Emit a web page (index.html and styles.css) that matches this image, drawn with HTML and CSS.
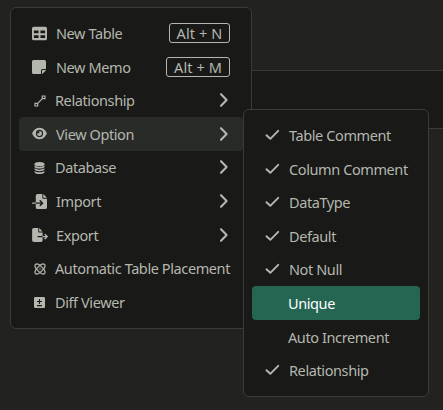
FILE: index.html
```
<!DOCTYPE html>
<html lang="en">
<head>
<meta charset="utf-8">
<title>Context menu</title>
<link rel="stylesheet" href="styles.css">
</head>
<body>
<svg class="defs" aria-hidden="true">
  <symbol id="chevron" viewBox="0 0 10 16"><path d="M2 2.200 7.600 8 2 13.800" fill="none" stroke="currentColor" stroke-width="2.1" stroke-linecap="round" stroke-linejoin="round"/></symbol>
  <symbol id="check" viewBox="0 0 15 12"><path d="M1.5 6.2 5.3 9.8 13.2 1.8" fill="none" stroke="currentColor" stroke-width="1.9" stroke-linecap="round" stroke-linejoin="round"/></symbol>
</svg>
<main class="canvas">
  <div class="band"></div>
  <ul class="menu menu-main">
    <li class="row"><span class="icon"><svg width="15" height="15" viewBox="0 0 512 512"><path fill="currentColor" fill-rule="evenodd" d="M64 24h384a64 64 0 0 1 64 64v336a64 64 0 0 1-64 64H64a64 64 0 0 1-64-64V88a64 64 0 0 1 64-64zM64 152v96h160v-96zM288 152v96h160v-96zM64 312v96h160v-96zM288 312v96h160v-96z"/></svg></span><span class="label inset">New Table</span><kbd class="n">Alt + N</kbd></li>
    <li class="row"><span class="icon"><svg width="14" height="14" viewBox="0 0 14 14"><path fill="currentColor" d="M1.5 0h11A1.5 1.5 0 0 1 14 1.5V9h-3.500A1.500 1.500 0 0 0 9 10.500V14H1.500A1.500 1.500 0 0 1 0 12.500v-11A1.500 1.500 0 0 1 1.500 0zM14 10v.3L10.300 14H10v-3a1 1 0 0 1 1-1z"/></svg></span><span class="label inset">New Memo</span><kbd class="m">Alt + M</kbd></li>
    <li class="row"><span class="icon small"><svg width="12" height="12" viewBox="0 0 12 12" fill="none" stroke="currentColor" stroke-width="1.2"><path d="M1 8.300h2.700V11H1zM8.300 1H11v2.700H8.300zM3.700 8.300l4.600-4.600"/></svg></span><span class="label">Relationship</span><svg class="chevron" width="10" height="16"><use href="#chevron"/></svg></li>
    <li class="row active"><span class="icon"><svg width="15" height="13" viewBox="0 0 576 512"><path fill="currentColor" fill-rule="evenodd" d="M288 32C207 32 143 69 96 112 49 156 18 208 3 244a32 32 0 0 0 0 24c15 36 46 88 93 132 47 43 111 80 192 80s145-37 192-80c47-44 78-96 93-132a32 32 0 0 0 0-24c-15-36-46-88-93-132-47-43-111-80-192-80zM144 256a144 144 0 1 1 288 0 144 144 0 0 1-288 0zM288 192a64 64 0 0 1-84 61c-6-2-12 2-12 8a96 96 0 1 0 101-101c-6 0-10 6-8 12 2 6 3 13 3 20z"/></svg></span><span class="label inset">View Option</span><svg class="chevron" width="10" height="16"><use href="#chevron"/></svg></li>
    <li class="row"><span class="icon small"><svg width="11" height="12" viewBox="0 0 11 12" fill="currentColor"><ellipse cx="5.500" cy="2.200" rx="5" ry="2.100"/><path d="M.5 3.600c2 1.800 8 1.800 10 0v1.100c0 2.500-10 2.500-10 0zM.5 6.300c2 1.800 8 1.800 10 0v1c0 2.500-10 2.500-10 0zM.5 8.900c2 1.800 8 1.800 10 0v1c0 2.700-10 2.700-10 0z"/></svg></span><span class="label">Database</span><svg class="chevron" width="10" height="16"><use href="#chevron"/></svg></li>
    <li class="row"><span class="icon"><svg width="15" height="15" viewBox="0 0 512 512" fill="currentColor"><path d="M128 64a64 64 0 0 1 64-64h160v128a32 32 0 0 0 32 32h128v288a64 64 0 0 1-64 64H192a64 64 0 0 1-64-64V336h174l-39 39a24 24 0 0 0 34 34l80-80a24 24 0 0 0 0-34l-80-80a24 24 0 0 0-34 34l39 39H128zM128 288v48H24a24 24 0 0 1 0-48zM512 128H384V0z"/></svg></span><span class="label inset">Import</span><svg class="chevron" width="10" height="16"><use href="#chevron"/></svg></li>
    <li class="row"><span class="icon export"><svg width="16" height="14" viewBox="0 0 576 512" fill="currentColor"><path d="M0 64A64 64 0 0 1 64 0h160v128a32 32 0 0 0 32 32h128v128H216a24 24 0 0 0 0 48h168v112a64 64 0 0 1-64 64H64a64 64 0 0 1-64-64zM384 336v-48h110l-39-39a24 24 0 0 1 34-34l80 80a24 24 0 0 1 0 34l-80 80a24 24 0 0 1-34-34l39-39zM384 128H256V0z"/></svg></span><span class="label inset">Export</span><svg class="chevron" width="10" height="16"><use href="#chevron"/></svg></li>
    <li class="row"><span class="icon small"><svg width="12" height="12" viewBox="0 0 12 12" fill="none" stroke="currentColor" stroke-width="1.150"><ellipse cx="6" cy="6" rx="6.400" ry="2.700" transform="rotate(45 6 6)"/><ellipse cx="6" cy="6" rx="6.400" ry="2.700" transform="rotate(-45 6 6)"/><circle cx="6" cy="6" r=".8" fill="currentColor" stroke="none"/></svg></span><span class="label">Automatic Table Placement</span></li>
    <li class="row"><span class="icon small"><svg width="11" height="11" viewBox="0 0 11 11"><rect width="11" height="11" rx="1.300" fill="currentColor"/><path d="M3 4.500h5M5.500 2v5M3 8.600h5" stroke="#191917" stroke-width="1.100"/></svg></span><span class="label">Diff Viewer</span></li>
  </ul>
  <ul class="menu menu-sub">
    <li class="row"><span class="icon"><svg width="15" height="12"><use href="#check"/></svg></span><span class="label">Table Comment</span></li>
    <li class="row"><span class="icon"><svg width="15" height="12"><use href="#check"/></svg></span><span class="label">Column Comment</span></li>
    <li class="row"><span class="icon"><svg width="15" height="12"><use href="#check"/></svg></span><span class="label">DataType</span></li>
    <li class="row"><span class="icon"><svg width="15" height="12"><use href="#check"/></svg></span><span class="label">Default</span></li>
    <li class="row"><span class="icon"><svg width="15" height="12"><use href="#check"/></svg></span><span class="label">Not Null</span></li>
    <li class="row selected"><span class="icon empty"></span><span class="label">Unique</span></li>
    <li class="row"><span class="icon empty"></span><span class="label">Auto Increment</span></li>
    <li class="row"><span class="icon"><svg width="15" height="12"><use href="#check"/></svg></span><span class="label">Relationship</span></li>
  </ul>
</main>
</body>
</html>
```
FILE: styles.css
```
* { box-sizing: border-box; }
body { margin: 0; background: #222220; color: #b4b7ae; font: 14.5px/20px "Noto Sans", sans-serif; }
.defs { position: absolute; width: 0; height: 0; }
.canvas { position: relative; height: 410px; padding: 70px 0 0 200px; overflow: hidden; }
.band { height: 59px; background: #191917; border: solid #3b3b38; border-width: 1px 0; }
.menu { position: absolute; margin: 0; padding: 8px; list-style: none; background: #191917; border: 1px solid #3b3b38; border-radius: 6px; }
.menu-main { left: 10px; top: 7.3px; width: 242px; height: 321.4px; }
.menu-sub { left: 243px; top: 109.3px; width: 186px; height: 287.6px; }
.row { display: flex; align-items: center; height: 33.6px; padding: 0 12px; border-radius: 4px; white-space: nowrap; }
.active { background: #292b28; }
.selected { background: #256652; color: #fff; }
.icon { display: flex; justify-content: center; width: 16px; margin-right: 8px; flex: none; }
.icon svg { flex: none; }
.small { padding: 1px 0 0 1px; }
.export { padding-left: 1px; }
.label { flex: 1; letter-spacing: -0.4px; }
.inset { padding-left: 1px; }
.chevron { margin-right: 2px; flex: none; }
kbd { height: 20px; margin-right: 1px; border: 1px solid #b4b7ae; border-radius: 3px; text-align: center; font: inherit; line-height: 18px; letter-spacing: 0.1px; }
.n { width: 61px; }
.m { width: 64px; }
.menu-sub .icon { margin-right: 9px; }
.menu-sub .empty { margin-right: 8px; }
```
